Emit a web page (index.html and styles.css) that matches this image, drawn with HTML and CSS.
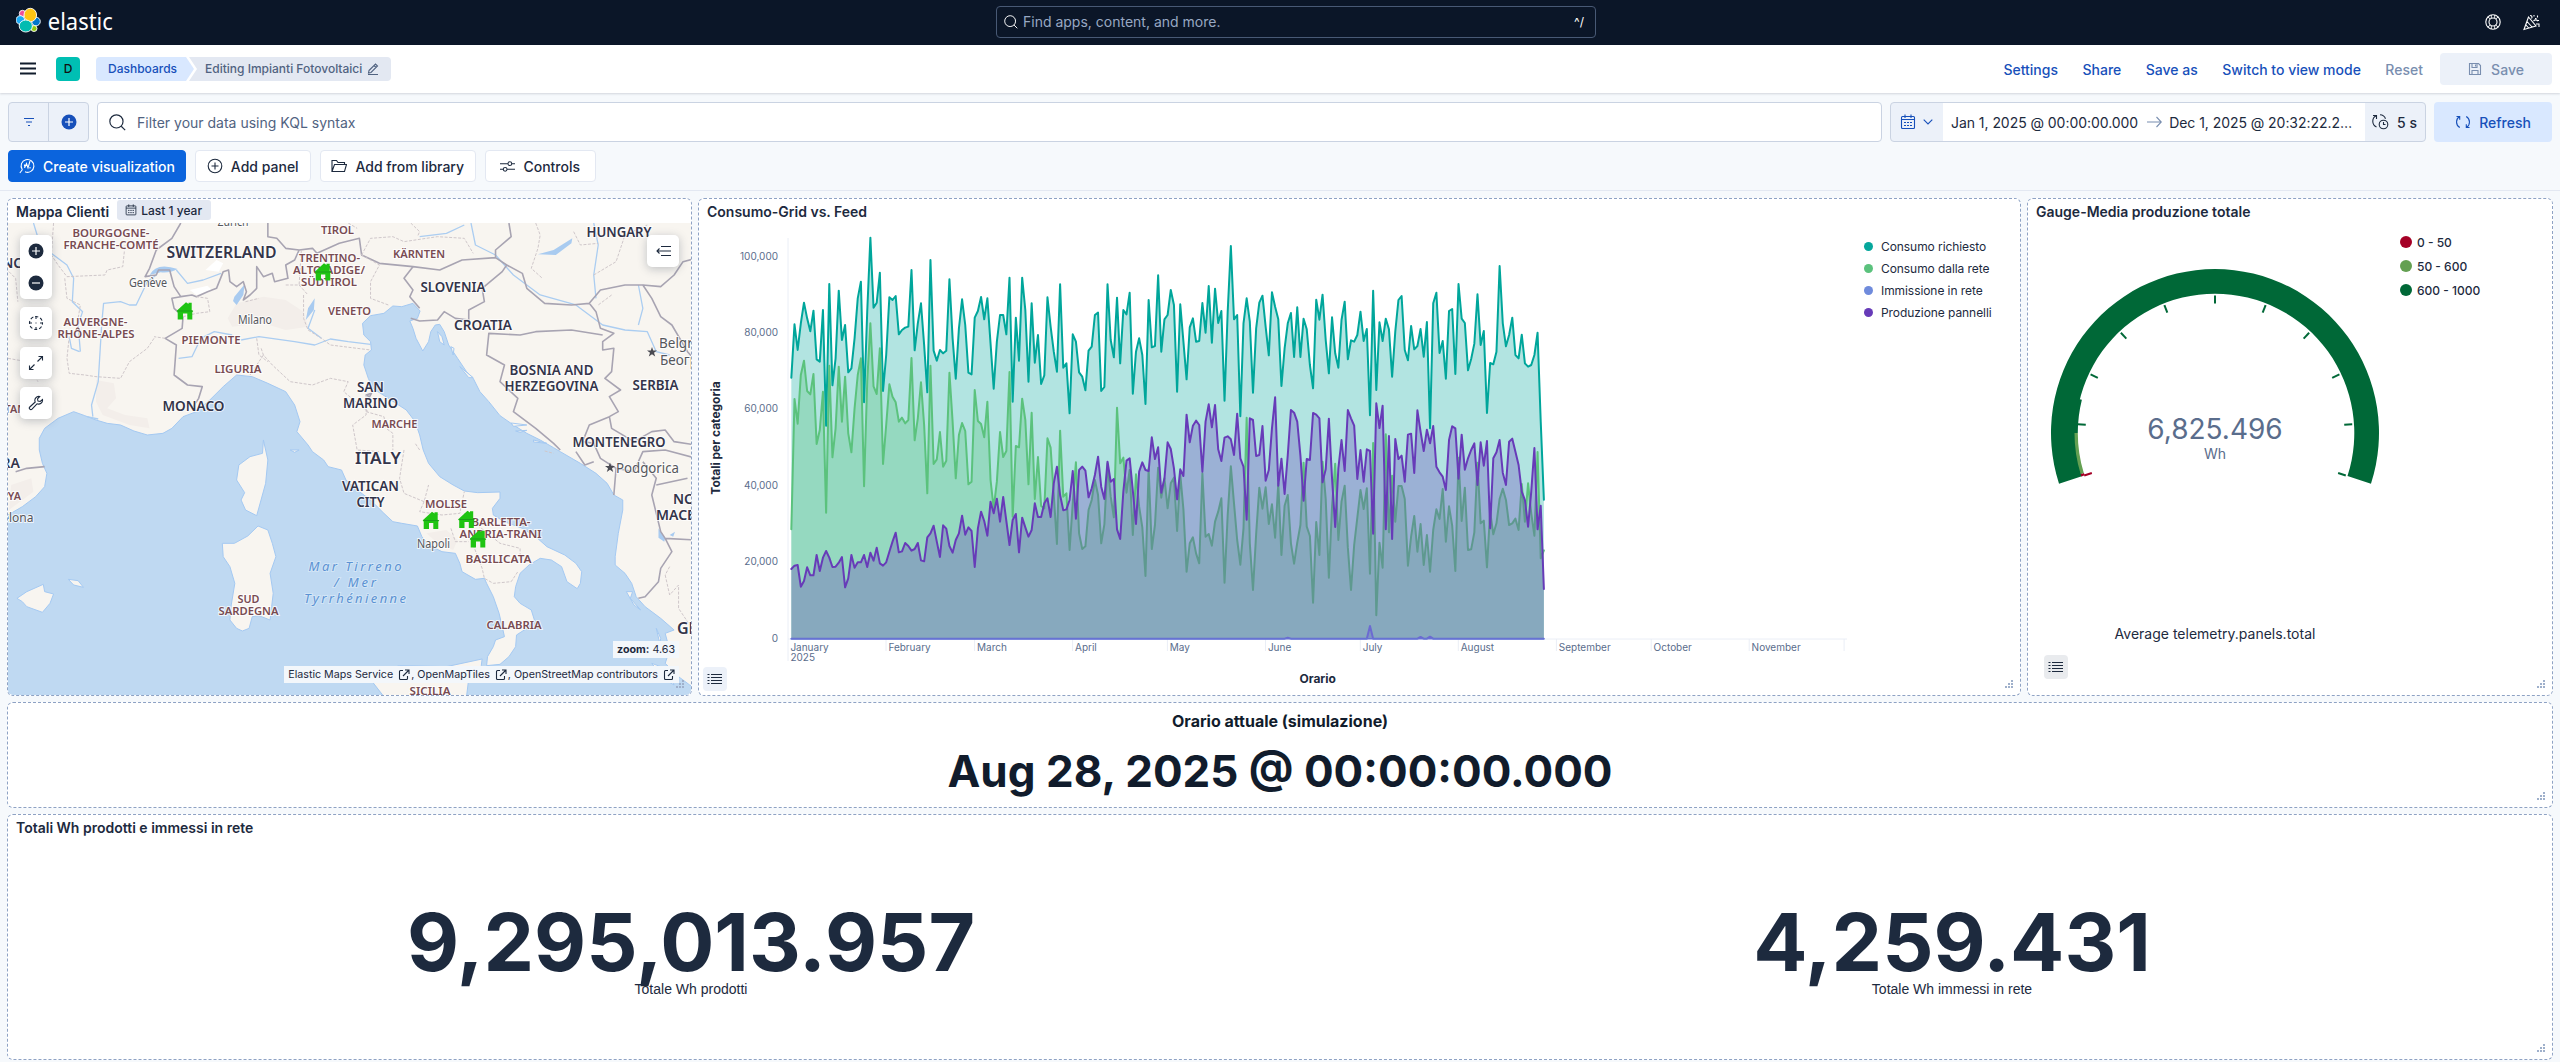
FILE: index.html
```html
<!DOCTYPE html>
<html lang="it">
<head>
<meta charset="utf-8">
<title>Editing Impianti Fotovoltaici - Elastic</title>
<link rel="stylesheet" href="styles.css">
</head>
<body>
<svg class="defs" width="0" height="0">
  <symbol id="i-search" viewBox="0 0 16 16"><circle cx="7" cy="7" r="6.2"/><path d="M11.5 11.5l3.7 3.7"/></symbol>
  <symbol id="i-cal" viewBox="0 0 16 16"><rect x="1.5" y="2.5" width="13" height="12" rx="1"/><path d="M1.5 5.500h13M5 .5v3.500M11 .5v3.500M4 8.500h2M7 8.500h2M10 8.500h2M4 11.500h2M7 11.500h2M10 11.500h2"/></symbol>
  <symbol id="i-refresh" viewBox="0 0 16 16"><path d="M4.500 2.500A6.500 6.500 0 0 0 4.800 13.600M1.500 2.500h3.200v3.200M11.500 13.500A6.500 6.500 0 0 0 11.200 2.400M14.500 13.500h-3.200v-3.200"/></symbol>
  <symbol id="i-list" viewBox="0 0 16 16"><path d="M2 3.500h2M5.500 3.500h11M2 6.500h2M5.500 6.500h11M2 9.500h2M5.500 9.500h11M2 12.500h2M5.500 12.500h11" transform="translate(-1.500 0)"/></symbol>
  <symbol id="i-pop" viewBox="0 0 12 12"><path d="M5 1.500H2.500a1 1 0 0 0-1 1v7a1 1 0 0 0 1 1h6a1 1 0 0 0 1-1V7M7 1h4v4M11 1L5 7"/></symbol>
  <symbol id="i-house" viewBox="0 0 17 18"><path d="M0 9L9.500.3 12 2V.8h3.200V8.200L17 9l-1.200 1V17.500h-5V11.500H6.500v6H1.200V10Z" stroke="none" fill="#1fc412"/><path d="M1 9h15" stroke="#1a9d1a" stroke-width="1"/></symbol>
  <symbol id="i-grip" viewBox="0 0 8 8"><path d="M6 0h2v2H6zM3 3h2v2H3zM6 3h2v2H6zM0 6h2v2H0zM3 6h2v2H3zM6 6h2v2H6z" fill="#9fb0cb" stroke="none"/></symbol>
</svg>

<header class="top">
  <svg class="logo" width="104" height="32" viewBox="0 0 104 32">
    <g stroke="#fff" stroke-width=".9">
      <circle cx="6.500" cy="7.500" r="3.200" fill="#f04e98"/>
      <circle cx="20" cy="15.500" r="4.300" fill="#0077cc"/>
      <circle cx="4.300" cy="14" r="4.300" fill="#1ba9f5"/>
      <circle cx="18" cy="22.500" r="3" fill="#93c90e"/>
      <ellipse cx="14.300" cy="9" rx="6.300" ry="6.700" fill="#fec514"/>
      <ellipse cx="9.800" cy="20" rx="6.600" ry="6" fill="#02bcb1"/>
    </g>
    <text x="31.800" y="23.500" textLength="65" lengthAdjust="spacingAndGlyphs">elastic</text>
  </svg>
  <div class="find"><svg class="ic" width="14" height="14"><use href="#i-search"/></svg><span>Find apps, content, and more.</span><kbd>^/</kbd></div>
  <div class="top-right">
    <svg class="ic" width="16" height="16" viewBox="0 0 16 16"><circle cx="8" cy="8" r="7.200"/><circle cx="8" cy="8" r="4"/><path d="M2.800 3l2.500 2M13.200 3l-2.500 2M2.800 13l2.500-2M13.200 13l-2.500-2M6.300 1v3M9.700 1v3M6.300 12v3M9.700 12v3" stroke-width=".9"/></svg>
    <svg class="ic" width="17" height="17" viewBox="0 0 17 17"><path d="M5.500 3L1 15.500 13 12zM4 7.500l5.500 6M3 11l3 3.500M7 1.500c2 0 2.500 1.500 1.500 3M10.500 7c2-2 3.500-1 4.500 0M13 10h3v3M11 1v1.500M14.500 1.500v2M12 4.500h1.500M15.500 6v1"/></svg>
  </div>
</header>

<nav class="bar">
  <svg class="burger" width="16" height="14" viewBox="0 0 16 14"><path d="M0 1.500h16M0 6.500h16M0 11.500h16"/></svg>
  <span class="space">D</span>
  <div class="crumbs">
    <span class="crumb first">Dashboards</span>
    <span class="crumb last">Editing Impianti Fotovoltaici
      <svg class="ic" width="12" height="12" viewBox="0 0 12 12"><path d="M2 7.500L8.500 1l2 2L4 9.500l-2.500.5zM7 2.500l2 2M1 11.500h10"/></svg></span>
  </div>
  <div class="links"><a>Settings</a><a>Share</a><a>Save as</a><a>Switch to view mode</a><a class="off">Reset</a></div>
  <button class="save"><svg class="ic" width="14" height="14" viewBox="0 0 14 14"><path d="M1.500 1.500h9l2 2v9h-11zM4 1.500v4h5v-4M7.500 2.500v2M4 12.500v-4h6v4"/></svg>Save</button>
</nav>

<section class="query">
  <div class="filters">
    <span><svg class="ic" width="12" height="12" viewBox="0 0 12 12"><path d="M1 2.500h10M3 6h6M5 9.500h2"/></svg></span>
    <span><svg width="16" height="16" viewBox="0 0 16 16"><circle cx="8" cy="8" r="7.500" fill="#1750ba"/><path d="M8 4v8M4 8h8" stroke="#fff" stroke-width="1.200"/></svg></span>
  </div>
  <div class="kql"><svg class="ic" width="17" height="17"><use href="#i-search"/></svg>Filter your data using KQL syntax</div>
  <div class="dates">
    <div class="quick"><svg class="ic" width="16" height="16"><use href="#i-cal"/></svg><svg class="ic" width="10" height="6" viewBox="0 0 10 6"><path d="M.7.7L5 5 9.300.7"/></svg></div>
    <div class="range"><span>Jan 1, 2025 @ 00:00:00.000</span><svg class="ic" width="15" height="12" viewBox="0 0 15 12"><path d="M0 6h14M9.500 1L14.300 6 9.500 11"/></svg><span>Dec 1, 2025 @ 20:32:22.2…</span></div>
    <div class="every"><svg class="ic" width="17" height="16" viewBox="0 0 17 16"><path d="M4.500 1.500A6.300 6.300 0 0 0 4.500 13M1 1.500h3.500V5M8 .8a6 6 0 0 1 5.500 4"/><circle cx="11.500" cy="10.500" r="4.300"/><path d="M11.500 8v2.500h2"/></svg>5 s</div>
  </div>
  <button class="refresh"><svg class="ic" width="16" height="16"><use href="#i-refresh"/></svg>Refresh</button>
</section>

<section class="tools">
  <button class="tool primary"><svg class="ic" width="16" height="16" viewBox="0 0 16 16"><path d="M3.200 11.500A6.400 6.400 0 1 1 6 13.800M3.500 11.500L.8 15M5.500 8.500v-2M5.500 10l2-4.500 1.500 4.500 2-7M11 9v1.500"/></svg>Create visualization</button>
  <button class="tool add"><svg class="ic" width="16" height="16" viewBox="0 0 16 16"><circle cx="8" cy="8" r="6.800"/><path d="M8 4.500v7M4.500 8h7"/></svg>Add panel</button>
  <button class="tool lib"><svg class="ic" width="16" height="16" viewBox="0 0 16 16"><path d="M1 13.500V2.500h4.500l1.500 2h6.500v2M1 13.500l2.500-7h12l-2 7z"/></svg>Add from library</button>
  <button class="tool wide"><svg class="ic" width="15" height="15" viewBox="0 0 16 16"><path d="M0 5h8.500M12.500 5H16M0 11h3.500M7.500 11H16"/><circle cx="10.500" cy="5" r="2"/><circle cx="5.500" cy="11" r="2"/></svg>Controls</button>
</section>

<main class="grid">
  <article class="panel map-panel">
    <h2>Mappa Clienti <span class="badge"><svg class="ic" width="12" height="12"><use href="#i-cal"/></svg>Last 1 year</span></h2>
    <div class="map">
      <svg class="geo" width="683" height="472" viewBox="8 223 683 472">
        <rect x="8" y="223" width="683" height="472" fill="#bfd9f2"/>
        <g transform="translate(0 195) scale(.44643 .33333)">
          <g class="land">
            <path d="M0 60H1600V1500L1568 1485 1545 1470 1520 1445 1490 1405 1500 1365 1490 1315 1510 1305 1480 1270 1445 1235 1425 1205 1415 1165 1400 1135 1378 1110 1378 1085 1385 1015 1395 945 1395 915 1375 900 1360 865 1335 835 1300 805 1255 770 1240 758 1210 735 1180 715 1150 690 1120 662 1095 620 1075 590 1060 550 1045 530 1025 490 1005 450 995 410 985 388 975 390 965 410 960 440 947 468 932 430 925 400 918 378 935 370 941 348 925 325 900 335 880 333 860 355 830 362 812 385 815 420 830 440 832 465 818 480 815 510 825 550 835 580 870 610 910 645 930 680 940 720 948 765 960 805 985 845 1015 870 1040 888 1070 893 1120 891 1120 910 1103 940 1105 960 1130 980 1170 1000 1200 1025 1225 1055 1265 1080 1290 1105 1303 1130 1300 1165 1293 1181 1270 1160 1258 1115 1235 1095 1210 1090 1185 1110 1165 1135 1155 1175 1152 1205 1165 1225 1190 1245 1197 1275 1180 1300 1157 1320 1155 1355 1140 1385 1120 1408 1090 1412 1092 1385 1105 1355 1110 1335 1130 1325 1125 1295 1118 1255 1105 1205 1090 1165 1085 1150 1065 1153 1035 1130 1030 1105 1020 1075 990 1070 960 1050 945 1025 935 993 900 985 880 980 860 955 830 915 800 885 775 855 765 825 735 815 725 795 700 770 690 750 665 710 672 680 660 630 640 590 600 565 565 545 530 540 500 575 470 615 440 650 410 665 385 700 365 715 330 720 300 708 270 690 240 685 215 675 190 662 165 650 130 670 100 700 88 730 88 765 95 805 105 835 100 875 80 905 50 935 18 960H0Z"/>
            <path d="M590 735L600 795 595 865 575 962 550 945 540 915 548 893 530 855 535 810 560 785 588 775Z"/>
            <path d="M578 993L600 1005 610 1045 618 1085 605 1135 612 1195 605 1275 580 1262 565 1265 558 1300 543 1308 530 1300 515 1275 518 1230 526 1165 515 1115 500 1085 498 1045 525 1045 555 1023Z"/>
            <path d="M38 1210L60 1190 97 1168 100 1190 120 1197 112 1225 95 1252 60 1235 50 1220ZM153 1153L175 1157 187 1177 165 1170ZM650 765L670 765 660 772ZM1403 1190L1417 1190 1412 1210 1435 1245 1420 1230ZM1470 1300L1480 1330 1478 1345ZM1460 1405L1490 1420 1510 1470 1485 1450Z"/>
            <path d="M835 1462L850 1430 895 1412 1000 1415 1080 1392 1078 1412 1050 1450 1045 1505H860Z"/>
            <path d="M980 410L990 425 995 450 985 440ZM1010 455L1017 460 1015 480ZM1030 515L1060 548 1050 548ZM1145 684L1180 690 1150 694ZM1155 708L1180 706 1165 712ZM1195 735L1225 745 1195 741Z"/>
          </g>
          <path fill="#f3eeea" d="M215 555L255 565 260 610 240 640 280 660 330 670 335 700 290 690 230 660 215 620ZM530 325L590 305 640 315 680 350 690 395 640 405 590 385 520 395 510 370ZM955 1015L1000 1005 1025 1035 1015 1065 985 1050ZM25 870L70 850 75 890 20 945Z"/>
          <path fill="#fff" d="M460 225L485 195 500 205 490 230ZM425 285L465 272 475 285 440 300Z"/>
          <path fill="#a9cbf0" d="M335 240Q350 200 398 222Q380 235 360 232Z M525 305L548 268 545 300 530 330 522 318ZM690 340L705 310 703 345 685 375ZM1205 178L1240 165 1282 130 1280 145 1245 180ZM1475 1000L1490 1030 1488 1040 1475 1028ZM1500 1020L1512 1010 1508 1025Z"/>
          <g class="river">
            <path d="M75 84L90 150 150 210 165 250 162 320 185 350 175 390 180 470M350 240L330 260 305 330 290 330 270 320 232 325 228 385 225 450 220 560 205 630 208 665M395 225L420 265 455 255 495 235M540 435L580 425 660 440 705 450 740 432 780 440 830 448M400 490L430 485 450 430 480 410 520 420M705 345L690 400 720 430M940 125L1000 115 1040 90M1055 84L1065 150 1110 180 1150 240 1210 300 1290 330 1350 390 1400 405 1450 410 1470 470 1500 480M1330 84L1340 150 1330 240 1335 310M1430 270L1440 340 1430 390M155 425L160 460 178 470M195 665L220 672"/>
          </g>
          <g class="nation">
            <path d="M405 84L385 130 350 165 335 220 325 245 350 240 355 225 380 225 390 275 405 305 430 300 440 305 465 290 485 280 500 230 512 225 515 260 530 275 545 260 552 290 545 315 560 300 575 280 575 215 590 245 610 235 615 260 645 250 640 210 660 195 670 165 640 160 620 130 600 125 600 84M670 165L700 160 710 175 760 145 805 130 810 180 850 205 925 215 985 225 1035 195 1110 188 1135 210 1125 230 1080 280 1085 320 1050 345 1050 375 1020 370 995 350 980 375 940 378 920 370M925 215L905 250 925 285 918 305 940 340M1110 188L1110 165 1145 125 1140 84M1135 210L1170 235 1180 280 1220 325 1280 330 1320 325 1345 285 1400 270 1440 270 1460 310 1480 365 1505 390 1540 470 1560 500M1440 270L1480 275 1510 240 1530 200 1560 190M1320 325L1335 350 1345 400 1375 415 1350 440 1350 465 1375 460 1370 530 1355 550 1390 585 1365 605 1385 650 1365 665 1320 690 1305 740 1330 745 1345 790M1350 420L1280 405 1200 410 1165 420 1095 415 1090 480 1130 510 1120 560 1160 610 1150 650 1200 700 1240 745 1255 765M1365 665L1370 700 1420 740 1460 710 1490 705 1510 740 1560 750M1330 800L1310 810 1290 770M1345 790L1380 820 1375 900M1380 820L1420 830 1440 770 1490 765 1560 790M1440 800L1470 850 1460 900 1480 1010 1490 1030 1505 1070 1480 1120 1475 1160 1445 1205 1430 1210M1490 1030L1560 1035M1470 870L1540 850M405 305L385 310 390 340 410 365 408 400 370 430 395 450 390 540 420 570 453 575 445 610 430 640M35 830L60 820 100 815M820 600L832 595 828 605Z"/>
          </g>
          <g class="region">
            <path d="M120 84L115 180 130 210 150 245 235 240 240 225 275 215 280 150M145 250L150 310 180 330 175 370M345 430L330 460 290 500 270 550 215 545 190 540 155 535 150 490 155 425M20 230L35 250 40 320M18 490L60 500 85 560M370 430L345 425M410 365L440 355 470 350 465 310 440 305M590 480L560 540M585 460L590 480 610 510 650 560 700 570 740 550 780 560 770 590 815 640 825 650M670 270L690 300M680 300L680 370 690 405 720 430 740 450 830 465M640 270L690 270M550 320L580 310M575 430L580 480 600 500M820 600L820 660 790 690 800 765 850 770M820 650L860 665 865 700 880 715 880 765M905 765L895 850 905 895 950 920 960 870M940 765L930 745M950 920L940 950 990 960 1030 955 1040 890M1040 955L1060 980 1120 1045 1165 1060 1165 1100M1060 1050L1080 1120 1085 1150 1105 1165 1145 1160 1160 1130M1010 1000L1020 1040 1050 1040M675 165L670 270M810 180L850 210 830 260 830 310 870 330M810 180L830 130 880 125 905 140 980 125 1040 130 1060 175M780 84L800 100M920 84L940 110 935 125M1200 84L1210 120 1205 160 1190 220 1215 250M1285 110L1300 150 1340 145M1330 240L1380 200 1400 120 1450 90M1370 300L1340 330M1490 1140L1500 1200 1520 1170 1520 1240 1545 1290M1500 1115L1490 1140M1220 768L1240 775"/>
          </g>
        </g>
        <g class="lbl fit country">
          <text x="30" y="268" text-anchor="end">FRANCE</text>
          <text x="221.500" y="258" textLength="110" class="lg">SWITZERLAND</text>
          <text x="619" y="237" textLength="65">HUNGARY</text>
          <text x="453" y="292" textLength="65">SLOVENIA</text>
          <text x="483" y="330" textLength="58">CROATIA</text>
          <text x="193.500" y="410.500" textLength="62">MONACO</text>
          <text x="370.500" y="392" textLength="27">SAN</text><text x="370.500" y="408" textLength="55">MARINO</text>
          <text x="551.500" y="374.500" textLength="84">BOSNIA AND</text><text x="551.500" y="390.500" textLength="94">HERZEGOVINA</text>
          <text x="655.500" y="390" textLength="46">SERBIA</text>
          <text x="619" y="446.500" textLength="93">MONTENEGRO</text>
          <text x="378" y="464" textLength="46" class="lg">ITALY</text>
          <text x="370.500" y="490.500" textLength="57">VATICAN</text><text x="370.500" y="506.500" textLength="28">CITY</text>
          <text x="20" y="468" text-anchor="end">ANDORRA</text>
          <text x="673" y="504" class="start">NORTH</text><text x="656" y="520" class="start">MACEDONIA</text>
          <text x="677" y="634" class="lg start">GREECE</text>
        </g>
        <g class="lbl fit reg">
          <text x="111" y="237" textLength="77">BOURGOGNE-</text><text x="111" y="249" textLength="95">FRANCHE-COMTÉ</text>
          <text x="337.500" y="234" textLength="33">TIROL</text><text x="419" y="258" textLength="52">KÄRNTEN</text>
          <text x="329.500" y="262" textLength="61">TRENTINO-</text><text x="329" y="274" textLength="72">ALTO-ADIGE/</text><text x="329" y="286" textLength="56">SÜDTIROL</text>
          <text x="349.500" y="314.500" textLength="43">VENETO</text>
          <text x="95.500" y="326" textLength="64">AUVERGNE-</text><text x="96" y="338" textLength="77">RHÔNE-ALPES</text>
          <text x="211" y="344" textLength="59">PIEMONTE</text><text x="238" y="373" textLength="47">LIGURIA</text>
          <text x="394.500" y="428" textLength="46">MARCHE</text><text x="446" y="507.500" textLength="42">MOLISE</text>
          <text x="501" y="525.500" textLength="59">BARLETTA-</text><text x="500.500" y="537.500" textLength="82">ANDRIA-TRANI</text>
          <text x="498.500" y="563" textLength="66">BASILICATA</text>
          <text x="248.500" y="603" textLength="22">SUD</text><text x="248.500" y="615" textLength="60">SARDEGNA</text>
          <text x="514" y="629" textLength="55">CALABRIA</text><text x="430" y="695" textLength="41">SICILIA</text>
          <text x="37" y="413" text-anchor="end">OCCITANIA</text><text x="21" y="499.500" text-anchor="end">CATALUNYA</text>
        </g>
        <g class="lbl fit city">
          <text x="233" y="226" textLength="31">Zürich</text><text x="148" y="286.500" textLength="38">Genève</text><text x="255" y="324" textLength="34">Milano</text>
          <text x="433.500" y="548" textLength="33">Napoli</text><text x="33.500" y="522" text-anchor="end">Barcelona</text>
          <text x="659" y="348" class="cap">Belgrade</text><text x="660" y="365" class="cap">Београд</text><text x="616" y="472.500" class="cap" textLength="63">Podgorica</text>
        </g>
        <path fill="#4a4a52" d="M652 347l1.200 3.600h3.800l-3 2.200 1.200 3.600-3.200-2.200-3.200 2.200 1.200-3.600-3-2.200h3.800zM610 462.500l1.200 3.600h3.800l-3 2.200 1.200 3.600-3.200-2.200-3.200 2.200 1.200-3.600-3-2.200h3.800z"/>
        <g class="lbl sea"><text x="355" y="571" textLength="93">Mar Tirreno</text><text x="355" y="587" textLength="42">/ Mer</text><text x="355" y="603" textLength="102">Tyrrhénienne</text></g>
        <use href="#i-house" x="176.500" y="302" width="17" height="18"/>
        <use href="#i-house" x="314.500" y="263" width="17" height="18"/>
        <use href="#i-house" x="422.500" y="511.500" width="17" height="18"/>
        <use href="#i-house" x="458" y="510.500" width="17" height="18"/>
        <use href="#i-house" x="469.500" y="530" width="17" height="18"/>
      </svg>
      <div class="ctrls">
        <div class="ctl two">
          <svg width="16" height="16" viewBox="0 0 16 16"><circle cx="8" cy="8" r="7.500" fill="#1d2a3e"/><path d="M8 4v8M4 8h8" stroke="#fff" stroke-width="1.200"/></svg>
          <svg width="16" height="16" viewBox="0 0 16 16"><circle cx="8" cy="8" r="7.500" fill="#1d2a3e"/><path d="M4 8h8" stroke="#fff" stroke-width="1.200"/></svg>
        </div>
        <div class="ctl"><svg class="ic" width="16" height="16" viewBox="0 0 16 16"><circle cx="8" cy="8" r="6.500" stroke-dasharray="3.100 2" stroke-dashoffset="1.500"/><path d="M8 1v3M8 12v3M1 8h3M12 8h3M7.500 8h1"/></svg></div>
        <div class="ctl"><svg class="ic" width="16" height="16" viewBox="0 0 16 16"><path d="M9.500 6.500l5-5M10.500 1.500h4v4M6.500 9.500l-5 5M1.500 10.500v4h4"/></svg></div>
        <div class="ctl"><svg class="ic" width="16" height="16" viewBox="0 0 16 16"><path d="M14.500 4.500a4 4 0 0 1-5.500 4.300L4 14.200a1.500 1.500 0 0 1-2.200-2.200L7.200 7a4 4 0 0 1 4.500-5.500L9.500 3.800l.5 2.200 2.200.5z"/></svg></div>
      </div>
      <div class="ctl layers"><svg class="ic" width="15" height="12" viewBox="0 0 15 12"><path d="M5 1.500h10M1 6h14M5 10.500h10M3.500 3.500L1 6l2.500 2.500"/></svg></div>
      <div class="notes">
        <span class="note"><span><b>zoom:</b> 4.63</span></span>
        <span class="note"><span>Elastic Maps Service</span><svg class="ic" width="12" height="12"><use href="#i-pop"/></svg><span>, OpenMapTiles</span><svg class="ic" width="12" height="12"><use href="#i-pop"/></svg><span>, OpenStreetMap contributors</span><svg class="ic" width="12" height="12"><use href="#i-pop"/></svg></span>
      </div>
    </div>
    <svg class="grip" width="8" height="8"><use href="#i-grip"/></svg>
  </article>

  <article class="panel">
    <h2>Consumo-Grid vs. Feed</h2>
    <svg class="plot" width="1321" height="471" viewBox="699 223 1321 471">
      <g id="axes"></g>
      <g id="series"></g>
      <text class="axis-title" x="1317.700" y="682.500" text-anchor="middle">Orario</text>
      <text class="axis-title" transform="translate(719.500 438) rotate(-90)" text-anchor="middle">Totali per categoria</text>
    </svg>
    <ul class="legend">
      <li><i class="c1"></i>Consumo richiesto</li><li><i class="c2"></i>Consumo dalla rete</li><li><i class="c3"></i>Immissione in rete</li><li><i class="c4"></i>Produzione pannelli</li>
    </ul>
    <span class="list-btn"><svg class="ic" width="16" height="16"><use href="#i-list"/></svg></span>
    <svg class="grip" width="8" height="8"><use href="#i-grip"/></svg>
  </article>

  <article class="panel">
    <h2>Gauge-Media produzione totale</h2>
    <svg class="plot" width="524" height="471" viewBox="2028 223 524 471">
      <g id="gauge"></g>
      <text class="g-val" x="2215" y="439" text-anchor="middle">6,825.496</text>
      <text class="g-unit" x="2215" y="459" text-anchor="middle">Wh</text>
      <text class="g-lab" x="2215" y="639" text-anchor="middle">Average telemetry.panels.total</text>
    </svg>
    <ul class="legend bands"><li><i class="b1"></i>0 - 50</li><li><i class="b2"></i>50 - 600</li><li><i class="b3"></i>600 - 1000</li></ul>
    <span class="list-btn grey"><svg class="ic" width="16" height="16"><use href="#i-list"/></svg></span>
    <svg class="grip" width="8" height="8"><use href="#i-grip"/></svg>
  </article>

  <article class="panel full clock">
    <p class="clock-t">Orario attuale (simulazione)</p>
    <p class="clock-v">Aug 28, 2025 @ 00:00:00.000</p>
    <svg class="grip" width="8" height="8"><use href="#i-grip"/></svg>
  </article>

  <article class="panel full">
    <h2>Totali Wh prodotti e immessi in rete</h2>
    <div class="totals">
      <div><strong>9,295,013.957</strong><span>Totale Wh prodotti</span></div>
      <div><strong>4,259.431</strong><span>Totale Wh immessi in rete</span></div>
    </div>
    <svg class="grip" width="8" height="8"><use href="#i-grip"/></svg>
  </article>
</main>
<script src="charts.js"></script>
</body>
</html>
```
FILE: styles.css
```css
*{box-sizing:border-box}
body{margin:0;width:2560px;height:1062px;overflow:hidden;background:#f6f9fc;font-family:Inter,"Liberation Sans",sans-serif;font-size:14px;color:#1d2a3e}
h2,p,ul{margin:0;padding:0}
button{font:inherit;border:0;padding:0}
.defs{position:absolute}
svg{display:block;flex:none}
.ic{fill:none;stroke:currentColor;stroke-width:1.1}

.top{display:grid;grid-template-columns:996px 600px 1fr;align-items:center;height:45px;background:#0b1628;color:#fff}
.logo{margin-left:16px;margin-top:-1px}
.logo text{font:400 24px "Noto Sans",sans-serif;fill:#fff}
.find{display:flex;align-items:center;gap:5px;height:32px;margin-top:-1px;padding:0 11px 1px 7px;border:1px solid #485975;border-radius:4px;color:#98a8c3}
.find svg{color:#fff}
.find kbd{margin-left:auto;font:inherit;font-size:12px;color:#fff}
.top-right{display:flex;justify-content:flex-end;gap:22px;padding-right:20px}

.bar{display:flex;align-items:center;height:48px;margin-bottom:9px;padding:0 8px 0 20px;background:#fff;box-shadow:0 1px 2px rgba(43,57,79,.18)}
.burger{fill:none;stroke:#111c2c;stroke-width:2}
.space{width:24px;height:24px;margin:0 16px 0 20px;border-radius:4px;background:#00bfb3;font:500 12px/24px Inter,sans-serif;text-align:center;color:#111}
.crumbs{display:flex;font-size:12px;font-weight:500;line-height:24px}
.crumb{display:flex;align-items:center;height:24px}
.first{width:98px;padding-left:12px;background:#d9e8ff;color:#1750ba;border-radius:4px 0 0 4px;clip-path:polygon(0 0,90px 0,98px 50%,90px 100%,0 100%)}
.last{gap:5px;width:202px;margin-left:-5px;padding-left:16px;background:#e3e8f2;color:#516381;border-radius:0 4px 4px 0;clip-path:polygon(0 0,100% 0,100% 100%,0 100%,8px 50%)}
.links{display:flex;gap:24.500px;margin-left:auto;font-weight:500;color:#1750ba}
.off{color:#798eaf}
.save{display:flex;align-items:center;justify-content:center;gap:9px;width:112px;height:32px;margin-left:17px;border-radius:4px;background:#ecf1f9;color:#798eaf;font-weight:500}

.query{display:flex;gap:8px;height:40px;padding:0 8px}
.filters{display:flex;width:81px;border:1px solid #cad3e2;border-radius:4px;background:#ecf1f9;color:#1750ba;overflow:hidden}
.filters span{flex:1;display:grid;place-items:center}
.filters span+span{border-left:1px solid #cad3e2}
.kql{flex:1;display:flex;align-items:center;gap:11px;padding-left:11px;border:1px solid #cad3e2;border-radius:4px;background:#fff;color:#516381}
.kql svg{color:#1d2a3e}
.dates{display:flex;width:536px;border:1px solid #cad3e2;border-radius:4px;background:#ecf1f9;overflow:hidden}
.quick{display:flex;align-items:center;gap:7px;width:52px;padding-left:9px;color:#1750ba}
.range{flex:1;display:flex;align-items:center;padding-left:8px;background:#fff;white-space:nowrap;letter-spacing:-.05px}
.range svg{color:#798eaf;margin:0 7px 0 9px}
.every{display:flex;align-items:center;gap:8px;width:60px;padding-left:7px;font-weight:500}
.refresh{display:flex;align-items:center;justify-content:center;gap:8px;width:118px;border-radius:4px;background:#d9e8ff;color:#1750ba;font-weight:500}

.tools{display:flex;gap:8.500px;height:49px;padding:8px 8px 0;border-bottom:1px solid #e3e8f2}
.tool{display:flex;align-items:center;justify-content:center;gap:8px;height:32px;border:1px solid #e3e8f2;border-radius:4px;background:#fff;font-weight:450;white-space:nowrap;color:#1d2a3e}
.primary{width:178px;border-color:#0b64dd;background:#0b64dd;color:#fff}
.add{width:116.500px}
.lib{width:156.500px}
.wide{width:111.500px}

.grid{display:grid;grid-template-columns:685px 1323px 526px;grid-template-rows:498px 106px 246px;gap:6px;padding:7px}
.panel{position:relative;border:1px dashed #8ea2c4;border-radius:6px;background:#fff;overflow:hidden}
.full{grid-column:1/-1}
h2{display:flex;align-items:center;gap:8px;height:24px;padding-left:8px;font-size:14px;font-weight:600}
.badge{display:flex;align-items:center;gap:4px;height:20px;padding:0 9px 0 8px;border-radius:3px;background:#e3e8f2;font-size:12px;font-weight:500;margin-top:-2px}
.grip{position:absolute;right:7px;bottom:7px}

.map{position:relative;height:472px}
.land path{fill:#f8f5f0;stroke:#a4c9f2;stroke-width:1;vector-effect:non-scaling-stroke}
.river path,.nation path,.region path{fill:none;vector-effect:non-scaling-stroke;stroke-linejoin:round}
.river path{stroke:#abcdf1;stroke-width:1.3}
.nation path{stroke:#a8a4b2;stroke-width:1.6}
.region path{stroke:#cfc7ca;stroke-width:1;stroke-dasharray:3 1.500}
.lbl text{text-anchor:middle;paint-order:stroke;stroke:#fff;stroke-opacity:.75;stroke-width:2px;font-family:"Noto Sans",sans-serif}
.country text{font-size:14px;font-weight:600;fill:#33344a}
.country .lg{font-size:16px}
.lbl .start{text-anchor:start}
.lbl text[text-anchor=end]{text-anchor:end}
.reg text{font-size:10.800px;font-weight:600;fill:#784b52}
.city text{font-size:12px;fill:#55575c}
.city .cap{font-size:13.500px;text-anchor:start}
.sea text{font-size:13px;font-style:italic;fill:#5b92d3;stroke:#d9e9f8}
.ctrls{position:absolute;left:12px;top:12px;display:grid;gap:8px}
.ctl{display:grid;place-items:center;width:32px;height:32px;border-radius:5px;background:#fff;box-shadow:0 2px 10px rgba(43,57,79,.28)}
.two{height:64px;grid-auto-rows:32px}
.layers{position:absolute;right:12px;top:12px}
.notes{position:absolute;right:12px;bottom:12px;display:flex;flex-direction:column;align-items:flex-end;gap:8px;font-size:10.700px;line-height:17px}
.note{display:flex;padding:0 4px;background:#f3f7fb;white-space:pre}
.note svg{margin:2.500px 1px 0 5px}
.note svg:last-child{margin-right:0}

.axis text{font-size:10px;fill:#5a6d8c}
.axis-title{font-size:12px;font-weight:700;fill:#1d2a3e}
.axis path{stroke:#eaeef6;stroke-width:1;fill:none}
.legend{position:absolute;left:1165px;top:36px;display:grid;grid-auto-rows:22px;list-style:none;font-size:12px;letter-spacing:-.07px}
.legend li{display:flex;align-items:center;gap:8px;white-space:nowrap}
.legend i{width:9px;height:9px;border-radius:50%}
.c1{background:#06a79c}.c2{background:#5bc27d}.c3{background:#6f8bdc}.c4{background:#673bb8}
.bands{left:372px;top:31px;grid-auto-rows:24px;font-weight:500;letter-spacing:0}
.bands li{gap:5px}
.bands i{width:12px;height:12px}
.b1{background:#a50026}.b2{background:#64a052}.b3{background:#006837}
.list-btn{position:absolute;left:4px;bottom:4px;display:grid;place-items:center;width:24px;height:24px;border-radius:4px;background:#ecf1f9}
.list-btn.grey{left:16px;bottom:16px;background:#e9ebee}
.g-val{font-size:28px;fill:#5a6d8c}
.g-unit{font-size:14px;fill:#5a6d8c}
.g-lab{font-size:14px;fill:#1d2a3e}

.clock{display:flex;flex-direction:column;align-items:center;color:#111c2c;font-weight:700}
.clock-t{margin-top:6px;font-size:16px;line-height:24px}
.clock-v{margin-top:11px;font-size:44px;line-height:54px}
.totals{display:grid;grid-template-columns:1366px 1156px;margin-top:63px;text-align:center}
.totals div{display:flex;flex-direction:column}
.totals strong{font-size:80.300px;line-height:80px;font-weight:700}
.totals span{margin-top:-3px;font:14px/20px "Liberation Sans",sans-serif}
```
FILE: charts.js
```js
// Daily values as heights on the plot canvas: three units per pixel, zero line at 1331.
const request = [548,388,465,385,323,370,409,347,493,500,345,692,267,571,490,287,435,390,532,520,430,310,260,622,350,128,338,323,233,588,480,307,315,303,418,405,398,395,225,466,385,325,450,592,195,467,497,465,475,467,253,430,551,400,313,390,533,538,368,348,306,373,310,445,581,440,360,360,418,248,620,368,497,248,345,560,325,503,420,567,541,307,395,470,530,268,518,505,655,418,440,532,545,586,467,455,360,353,588,576,268,435,487,308,505,345,358,293,596,470,430,480,627,315,457,453,241,470,373,360,285,330,590,328,440,553,397,370,440,438,324,413,273,443,281,384,348,617,350,153,373,360,664,385,310,380,593,400,323,302,395,481,292,335,373,573,460,385,354,486,337,486,371,403,510,580,314,374,299,435,535,367,475,518,375,320,493,436,440,420,350,438,402,661,287,585,382,438,371,403,545,410,315,303,465,496,393,463,453,402,485,381,700,325,293,474,438,551,348,342,537,267,371,384,526,492,446,298,450,408,654,504,508,470,213,385,454,420,368,480,490,419,505,515,510,480,413,680,914];
const grid = [1003,612,686,540,497,588,598,537,747,705,590,953,512,787,700,515,680,545,715,772,640,540,490,874,560,385,574,597,460,807,690,568,605,622,680,668,685,675,489,736,670,562,690,895,512,807,793,711,815,797,533,680,850,720,684,708,868,860,585,678,687,727,620,855,940,860,711,786,768,531,965,753,757,611,675,868,653,912,786,933,940,730,758,900,1047,707,905,895,1065,925,802,1015,1062,1054,945,915,855,900,1045,988,805,905,967,638,805,788,893,825,1020,838,935,997,1143,820,1062,990,818,908,850,940,865,848,1008,838,943,1130,1045,1027,1075,1105,835,1025,1017,1052,980,950,910,1163,960,814,925,1035,1109,1000,668,1045,1185,1017,878,941,877,987,928,1028,865,1080,932,900,1045,1106,1043,990,803,995,1023,1223,981,1080,800,912,1148,935,806,1035,920,872,1058,1185,1050,968,885,942,880,1136,744,1261,1043,1118,718,1012,842,980,873,873,912,1112,1025,963,1070,987,1110,1020,1130,1005,943,972,882,1040,934,992,1128,788,978,878,1065,1063,1012,803,985,977,1117,950,1018,985,912,881,915,990,985,971,1005,867,980,865,955,1022,771,1090,1066];
const panels = [1122,1112,1110,1175,1158,1117,1141,1141,1080,1128,1088,1068,1088,1116,1115,1103,1086,1177,1150,1080,1118,1102,1102,1080,1116,1073,1097,1058,1105,1112,1102,1070,1040,1013,1072,1069,1044,1053,1067,1062,1044,1096,1099,1027,1015,992,1040,1086,991,1001,1053,1073,1035,1015,962,1019,997,1008,1116,1000,950,978,1022,920,955,911,980,906,978,1050,975,957,1072,968,997,1025,1005,925,966,966,925,910,966,865,815,900,946,943,915,828,971,825,815,827,907,880,840,785,875,912,800,860,852,1003,1032,890,797,790,887,987,830,802,825,828,727,792,757,893,850,742,762,820,913,823,843,659,742,692,677,690,830,680,628,697,630,763,798,728,724,733,780,656,790,815,974,670,675,783,780,693,857,825,700,607,872,791,897,780,645,653,680,782,917,792,795,654,659,670,862,823,671,850,996,820,735,828,645,670,692,852,765,860,763,768,1016,625,699,632,1003,723,1032,732,792,782,860,719,716,834,646,710,768,704,745,693,815,832,845,885,735,694,700,851,719,824,790,765,745,870,742,812,738,1000,790,772,735,833,870,740,731,770,810,890,915,995,890,759,1003,932,1182];
const feed = request.map(() => 1331);
feed[183] = 1293; feed[157] = 1328; feed[199] = 1326; feed[202] = 1325;

const X = i => (690 + (304 + i * 9.486) / 3).toFixed(2);
const Y = v => (195 + v / 3).toFixed(2);
const draw = (data, color, fill) => {
  const line = data.map((v, i) => `${X(i)} ${Y(v)}`).join('L');
  return `<path d="M${line}L${X(238)} ${Y(1331)}L${X(0)} ${Y(1331)}Z" fill="${color}" fill-opacity="${fill}"/>` +
    `<path d="M${line}" fill="none" stroke="${color}" stroke-width="2" stroke-linejoin="round" stroke-linecap="round"/>`;
};
document.getElementById('series').innerHTML =
  draw(request, '#00a69b', .3) + draw(grid, '#5bc27d', .33) + draw(feed, '#6f7fdc', .3) + draw(panels, '#673bb8', .3) +
  `<path d="M${X(0)} 638.700H${X(238)}" stroke="#6673d2" stroke-width="1.500"/>`;

let axes = '';
['0', '20,000', '40,000', '60,000', '80,000', '100,000'].forEach((t, i) => {
  axes += `<text x="778" y="${(641.5 - i * 76.4).toFixed(1)}" text-anchor="end">${t}</text>`;
});
[['January', 0], ['February', 31], ['March', 59], ['April', 90], ['May', 120], ['June', 151], ['July', 181], ['August', 212], ['September', 243], ['October', 273], ['November', 304], ['', 334]].forEach(([t, d]) => {
  const x = 788 + d * 3.162;
  if (d) axes += `<path d="M${x.toFixed(1)} 639V651"/>`;
  axes += `<text x="${(x + 2.400).toFixed(1)}" y="650.5">${t}</text>`;
});
axes += '<text x="790.400" y="660.500">2025</text><path d="M788 238V661M788 639H1847" stroke-width="1.500"/>';
const a = document.getElementById('axes');
a.setAttribute('class', 'axis');
a.innerHTML = axes;

// Place names are fitted by glyph width; sea names keep their open tracking.
document.querySelectorAll('.fit text[textLength]').forEach(t => t.setAttribute('lengthAdjust', 'spacingAndGlyphs'));

// Gauge: 216 degree dial, thin band scale on the inner edge, eleven ticks.
const pt = (deg, r) => {
  const t = deg * Math.PI / 180;
  return `${(2215 + r * Math.sin(t)).toFixed(2)} ${(433 - r * Math.cos(t)).toFixed(2)}`;
};
const ring = (a0, a1, r0, r1, c) => {
  const big = a1 - a0 > 180 ? 1 : 0;
  return `<path d="M${pt(a0, r1)}A${r1} ${r1} 0 ${big} 1 ${pt(a1, r1)}L${pt(a1, r0)}A${r0} ${r0} 0 ${big} 0 ${pt(a0, r0)}Z" fill="${c}"/>`;
};
let g = ring(-108, 108, 139.300, 164, '#006837') +
  ring(-108, -107, 137, 140.500, '#a50026') + ring(-107, -90, 137.200, 140.500, '#64a052') + ring(-90, -76, 137.200, 140.500, '#006837');
for (let i = 0; i <= 10; i++) {
  const d = -108 + i * 21.600;
  g += `<path d="M${pt(d, 137.500)}L${pt(d, 129.500)}" stroke="${i ? '#006837' : '#a50026'}" stroke-width="2"/>`;
}
document.getElementById('gauge').innerHTML = g;
```
